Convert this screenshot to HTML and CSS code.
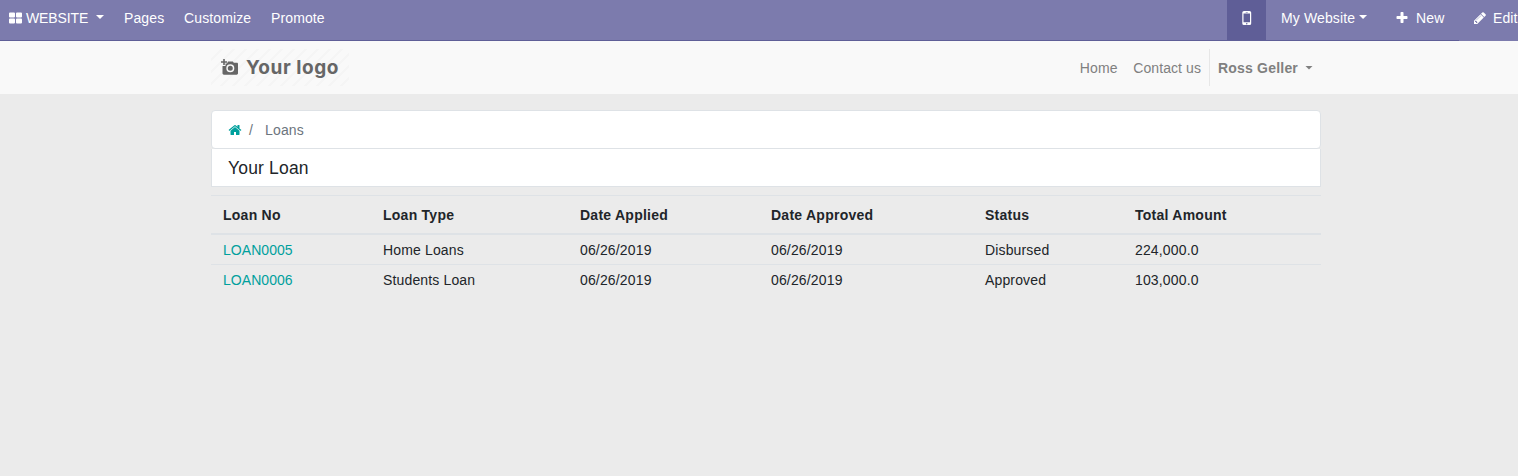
FILE: index.html
```html
<!DOCTYPE html>
<html lang="en">
<head>
<meta charset="utf-8">
<title>Loans | My Website</title>
<link rel="stylesheet" href="styles.css">
</head>
<body>
<nav class="editor-bar">
  <div class="menu">
    <a class="brand"><svg class="icon" viewBox="0 0 14 14"><path d="M2 1.500h4q1 0 1 1v3q0 1-1 1H2q-1 0-1-1v-3q0-1 1-1zm7 0h4q1 0 1 1v3q0 1-1 1H9q-1 0-1-1v-3q0-1 1-1zm-7 6h4q1 0 1 1v3q0 1-1 1H2q-1 0-1-1v-3q0-1 1-1zm7 0h4q1 0 1 1v3q0 1-1 1H9q-1 0-1-1v-3q0-1 1-1z"/></svg><span class="brand-name">WEBSITE</span><i class="caret"></i></a>
    <a class="pages">Pages</a>
    <a class="customize">Customize</a>
    <a>Promote</a>
  </div>
  <div class="tools">
    <a class="mobile"><svg class="icon-mobile" viewBox="0 0 10 14"><path fill-rule="evenodd" d="M2 0h5.500Q9.200 0 9.200 1.600v10.800q0 1.600-1.700 1.600H2Q.3 14 .3 12.400V1.600Q.3 0 2 0zm-.5 2.400v8.800h6.500V2.400zM3.700 1v.5h2.100V1zm1.050 10.900a.75.75 0 1 0 0 1.500.75.75 0 0 0 0-1.500z"/></svg></a>
    <a class="site">My Website<i class="caret"></i></a>
    <a class="new"><svg class="icon" viewBox="0 0 1792 1792"><path d="M1600 736v192q0 40-28 68t-68 28h-416v416q0 40-28 68t-68 28h-192q-40 0-68-28t-28-68v-416h-416q-40 0-68-28t-28-68v-192q0-40 28-68t68-28h416v-416q0-40 28-68t68-28h192q40 0 68 28t28 68v416h416q40 0 68 28t28 68z"/></svg>New</a>
    <a class="edit"><svg class="icon" viewBox="0 0 1792 1792"><path d="M491 1536l91-91-235-235-91 91v107h128v128h107zm523-928q0-22-22-22-10 0-17 7l-542 542q-7 7-7 17 0 22 22 22 10 0 17-7l542-542q7-7 7-17zm-54-192l416 416-832 832h-416v-416zm683 96q0 53-37 90l-166 166-416-416 166-165q36-38 90-38 53 0 91 38l235 234q37 39 37 91z"/></svg>Edit</a>
  </div>
</nav>
<header class="site-header">
  <div class="container header-row">
    <div class="logo">
      <svg class="camera" viewBox="0 0 18 17"><path fill-rule="evenodd" d="M2.200 0h1.600v2.200H6v1.600H3.800V6H2.200V3.800H0V2.200h2.200zM7 2.500h4.800l1 1.300h3c.8 0 1.200.5 1.200 1.300v9.200c0 .9-.6 1.400-1.400 1.400H2.900c-.8 0-1.400-.5-1.400-1.400V7.100h3V4.600h1.500zM9.300 5.300a4 4 0 1 0 0 8 4 4 0 0 0 0-8zm0 1.500a2.500 2.500 0 1 1 0 5 2.500 2.500 0 0 1 0-5z"/></svg>
      <span class="logo-text">Your logo</span>
    </div>
    <nav class="links">
      <a>Home</a>
      <a class="contact">Contact us</a>
      <a class="user">Ross Geller<i class="caret"></i></a>
    </nav>
  </div>
</header>
<main class="container">
  <div class="breadcrumb"><svg class="icon home" viewBox="0 0 1792 1792"><path d="M1472 992v480q0 26-19 45t-45 19h-384v-384h-256v384h-384q-26 0-45-19t-19-45v-480q0-1 .5-3t.5-3l575-474 575 474q1 2 1 6zm223-69l-62 74q-8 9-21 11h-3q-13 0-21-7l-692-577-692 577q-12 8-24 7-13-2-21-11l-62-74q-8-10-7-23.500t11-21.500l719-599q32-26 76-26t76 26l244 204v-195q0-14 9-23t23-9h192q14 0 23 9t9 23v408l219 182q10 8 11 21.500t-7 23.500z"/></svg><span class="slash">/</span><span>Loans</span></div>
  <h1 class="page-title">Your Loan</h1>
  <table class="loans">
    <colgroup><col class="c1"><col class="c2"><col class="c3"><col class="c4"><col class="c5"><col class="c6"></colgroup>
    <thead><tr><th>Loan No</th><th>Loan Type</th><th>Date Applied</th><th>Date Approved</th><th>Status</th><th>Total Amount</th></tr></thead>
    <tbody>
      <tr><td><a>LOAN0005</a></td><td>Home Loans</td><td>06/26/2019</td><td>06/26/2019</td><td>Disbursed</td><td>224,000.0</td></tr>
      <tr><td><a>LOAN0006</a></td><td>Students Loan</td><td>06/26/2019</td><td>06/26/2019</td><td>Approved</td><td>103,000.0</td></tr>
    </tbody>
  </table>
</main>
</body>
</html>
```
FILE: styles.css
```css
* { box-sizing: border-box; }
body { margin: 0; height: 476px; overflow: hidden; background: #ebebeb; color: #212529; font: 14px/21px "Liberation Sans", Arial, sans-serif; }
svg { display: block; fill: currentColor; flex: none; }
.icon { width: 14px; height: 14px; }
.caret { display: inline-block; width: 8px; height: 4px; background: currentColor; clip-path: polygon(0 0, 100% 0, 50% 100%); flex: none; }

.editor-bar { display: flex; justify-content: space-between; height: 41px; background: #7c7bad; color: #fff; white-space: nowrap; }
.menu, .tools { display: flex; border-bottom: 1px solid #5f5e97; }
.menu { flex: 1; }
.menu a, .tools a { display: flex; align-items: center; height: 36px; letter-spacing: 0.12px; }
.brand { padding-left: 8px; }
.menu .brand-name { width: 63px; margin: 0 7px 0 4px; letter-spacing: -0.1px; }
.menu .brand { width: 124px; }
.menu .pages { width: 60px; }
.menu .customize { width: 87px; }
.brand .caret, .site .caret { position: relative; top: -1px; }
.tools { width: 291px; border-bottom: 0; }
.tools a { flex: none; height: 41px; padding-bottom: 4px; border-bottom: 1px solid #5f5e97; }
.tools .mobile { width: 39px; justify-content: center; background: #5f5e97; }
.icon-mobile { width: 10px; height: 14px; }
.tools .site { width: 129px; padding-left: 15px; }
.site .caret { margin-left: 4px; }
.tools .new { width: 64px; }
.new .icon { margin-right: 7px; }
.tools .edit { width: 59px; padding-left: 14px; border-color: #7c7bad; }
.edit .icon { margin-right: 6px; }

.container { width: 1110px; margin-left: 211px; }
.site-header { height: 53px; padding-top: 8px; background: #f9f9f9; }
.header-row { display: flex; justify-content: space-between; height: 37px; }
.logo { display: flex; align-items: center; width: 138px; padding-left: 10px; color: #666; background: repeating-linear-gradient(135deg, #f9f9f9 0 6.500px, #f5f5f5 6.500px 8.500px); }
.camera { width: 18px; height: 17px; margin-right: 7px; }
.logo-text { font: bold 19px/30px Inter, sans-serif; letter-spacing: 0.55px; white-space: nowrap; }
.links { display: flex; align-items: center; color: #808080; letter-spacing: 0.15px; white-space: nowrap; }
.links > a { padding-top: 2px; }
.contact { margin-left: 15.500px; letter-spacing: 0.08px; }
.links .user { display: flex; align-items: center; width: 112px; height: 37px; margin-left: 8px; padding-left: 8px; border-left: 1px solid #e7e7e7; font-weight: bold; letter-spacing: 0.2px; }
.user .caret { position: relative; top: -1px; margin-left: 7px; }

.breadcrumb { display: flex; align-items: center; height: 39px; margin-top: 16px; padding: 1px 0 0 16px; border: 1px solid #dee2e6; border-radius: 4px; background: #fff; color: #6c757d; letter-spacing: 0.17px; }
.home { color: #00a09d; }
.slash { width: 16px; margin: 0 0 0 7px; }
.page-title { height: 38px; margin: 0 0 8px; padding: 1px 16px 0; border: 1px solid #dee2e6; border-top: 0; background: #fff; font-size: 17.500px; line-height: 37px; font-weight: normal; letter-spacing: 0.17px; }
.loans { width: 1110px; table-layout: fixed; border-spacing: 0; letter-spacing: 0.15px; }
.c1 { width: 160px; } .c2 { width: 197px; } .c3 { width: 191px; } .c4 { width: 214px; } .c5 { width: 150px; } .c6 { width: 198px; }
th, td { padding: 2px 12px 0; border-top: 1px solid #dee2e6; text-align: left; }
th { height: 40px; border-bottom: 2px solid #dee2e6; letter-spacing: 0.25px; }
td { height: 30px; }
tbody tr:first-child td { height: 29px; border-top: 0; }
td a { color: #00a09d; letter-spacing: 0.05px; }
```
